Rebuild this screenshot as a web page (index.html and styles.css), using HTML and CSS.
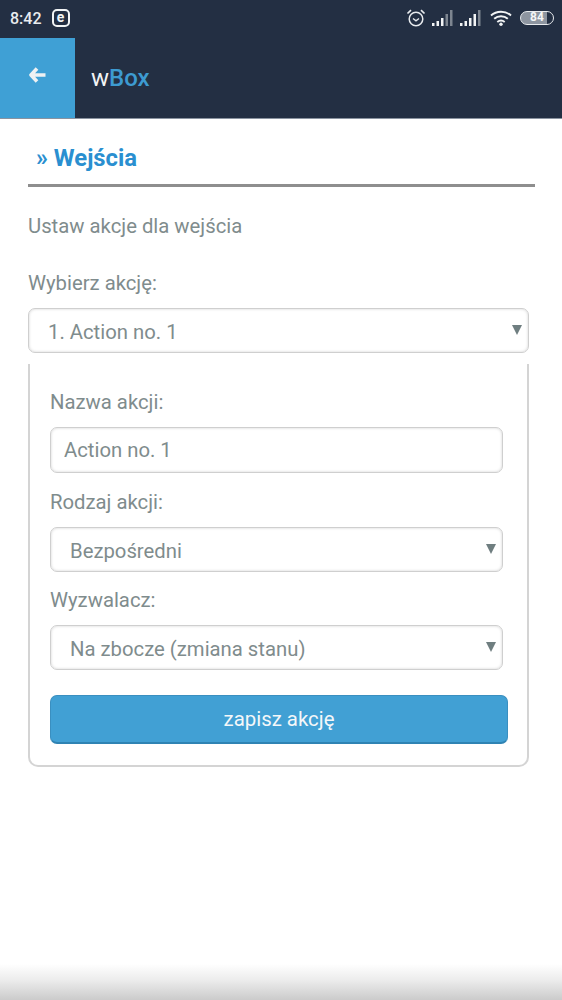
FILE: index.html
```html
<!DOCTYPE html>
<html lang="pl">
<head>
<meta charset="utf-8">
<title>wBox</title>
<link rel="stylesheet" href="styles.css">
</head>
<body>
<div class="page">
  <div class="statusbar">
    <div class="status-left">
      <span class="clock">8:42</span>
      <span class="e-badge">e</span>
    </div>
    <div class="status-right">
      <svg class="ic-alarm" viewBox="0 0 20 20" width="20" height="20"><circle cx="10" cy="11" r="6.800" fill="none" stroke="#e8ebee" stroke-width="1.500"/><path d="M7 10.500l3 2.400 3-2.400" fill="none" stroke="#e8ebee" stroke-width="1.400"/><path d="M1.500 5.500L5 2.200M18.500 5.500L15 2.200" stroke="#e8ebee" stroke-width="1.700" fill="none"/></svg>
      <svg class="ic-signal" viewBox="0 0 22 16" width="22" height="16"><rect x="0" y="13" width="2.500" height="3" fill="#f2f4f5"/><rect x="4.500" y="11" width="2.500" height="5" fill="#f2f4f5"/><rect x="9" y="8" width="2.500" height="8" fill="#f2f4f5"/><rect x="13.500" y="4" width="2.500" height="12" fill="#7d8590"/><rect x="18" y="0" width="2.500" height="16" fill="#7d8590"/></svg>
      <svg class="ic-signal" viewBox="0 0 22 16" width="22" height="16"><rect x="0" y="13" width="2.500" height="3" fill="#f2f4f5"/><rect x="4.500" y="11" width="2.500" height="5" fill="#f2f4f5"/><rect x="9" y="8" width="2.500" height="8" fill="#f2f4f5"/><rect x="13.500" y="4" width="2.500" height="12" fill="#f2f4f5"/><rect x="18" y="0" width="2.500" height="16" fill="#7d8590"/></svg>
      <svg class="ic-wifi" viewBox="0 0 22 16" width="22" height="16"><path d="M1 5.500C6.500 .5 15.500 .5 21 5.500M4.200 8.800C8 5.300 14 5.300 17.800 8.800M7.300 12C9.500 10.200 12.500 10.200 14.700 12" fill="none" stroke="#f2f4f5" stroke-width="1.900"/><circle cx="11" cy="14.300" r="1.700" fill="#f2f4f5"/></svg>
      <span class="battery">84</span>
    </div>
  </div>
  <header class="appbar">
    <a class="back" href="#" aria-label="Wstecz">
      <svg viewBox="0 0 18 16" width="18" height="16"><path d="M8 1.500L2 8l6 6.500M2.500 8H16.500" fill="none" stroke="#eef1f3" stroke-width="3.600" stroke-linejoin="round"/></svg>
    </a>
    <div class="brand">w<b>Box</b></div>
  </header>
  <main class="content">
    <h1 class="title">» Wejścia</h1>
    <p class="intro">Ustaw akcje dla wejścia</p>
    <label class="label top-label">Wybierz akcję:</label>
    <div class="select-wrap top-select">
      <select class="field select"><option>1. Action no. 1</option></select>
    </div>
    <section class="card">
      <label class="label first">Nazwa akcji:</label>
      <input class="field input" type="text" value="Action no. 1">
      <label class="label second">Rodzaj akcji:</label>
      <div class="select-wrap">
        <select class="field select"><option>Bezpośredni</option></select>
      </div>
      <label class="label third">Wyzwalacz:</label>
      <div class="select-wrap">
        <select class="field select"><option>Na zbocze (zmiana stanu)</option></select>
      </div>
      <button class="save" type="button">zapisz akcję</button>
    </section>
  </main>
  <div class="bottom-fade"></div>
</div>
</body>
</html>
```
FILE: styles.css
```css
* { box-sizing: border-box; }
html, body { margin: 0; padding: 0; }
body { background: #fff; font-family: Roboto, "Liberation Sans", sans-serif; color: #7f8c8d; }
.page { width: 562px; height: 1000px; display: flex; flex-direction: column; overflow: hidden; }

.statusbar { height: 38px; background: #232f43; display: flex; justify-content: space-between; align-items: center; padding: 0 8px 2px 10px; }
.status-left { display: flex; align-items: center; gap: 10px; }
.clock { color: #e9ecef; font-size: 16px; font-weight: 500; }
.e-badge { width: 18px; height: 18px; border: 2px solid #f2f4f5; border-radius: 5px; color: #f2f4f5; font-size: 14px; font-weight: 700; line-height: 13px; text-align: center; }
.status-right { display: flex; align-items: center; gap: 6px; }
.ic-wifi { margin-left: 2px; margin-right: 2px; }
.battery { width: 34px; height: 14px; border: 1.500px solid #e8ebee; border-radius: 7px; color: #f4f6f7; font-size: 12px; font-weight: 700; line-height: 11px; text-align: center; background: linear-gradient(90deg, #8d95a0 0 80%, transparent 80%); }

.appbar { height: 81px; background: #232f43; display: flex; align-items: stretch; border-bottom: 1px solid #8a93a0; }
.back { width: 75px; background: #3fa0d5; display: flex; align-items: center; justify-content: center; padding-bottom: 7px; }
.brand { color: #f2f4f5; font-size: 24px; margin-left: 16px; align-self: center; }
.brand b { color: #3d9bd1; font-weight: 500; }

.content { padding: 0 27px 0 28px; }
.title { margin: 0; height: 68px; padding: 24px 0 0 8px; border-bottom: 3px solid #8e8e8e; color: #2a8fd0; font-size: 23.800px; font-weight: 700; line-height: 30px; }
.intro { margin: 27px 0 0; font-size: 20.300px; line-height: 24px; }
.label { display: block; font-size: 20.300px; line-height: 24px; color: #7f8c8d; }
.top-label { margin-top: 33px; margin-bottom: 13px; }

.select-wrap { position: relative; }
.top-select { width: 501px; }
.select-wrap::after { content: ""; position: absolute; right: 7px; top: 17px; border-left: 5px solid transparent; border-right: 5px solid transparent; border-top: 10px solid #6f7e80; }
.field { display: block; width: 100%; height: 45px; border: 1px solid #cfcfcf; border-radius: 7px; background: #fff; color: #7f8c8d; font-family: inherit; font-size: 20.300px; box-shadow: inset 0 0 3px rgba(0,0,0,.18); outline: none; margin: 0; }
.select { appearance: none; -webkit-appearance: none; padding: 2px 19px 0; }
.input { height: 46px; padding: 0 13px; }

.card { margin-top: 11px; height: 403px; width: 501px; padding: 26px 24px 0 20px; border: 2px solid #d4d4d4; border-top: 0; border-radius: 0 0 10px 10px; }
.first { margin-bottom: 13px; }
.second { margin-top: 17px; margin-bottom: 13px; }
.third { margin-top: 16px; margin-bottom: 13px; }
.save { display: block; width: 458px; height: 49px; margin-top: 25px; border: 1px solid #3a8fc0; border-bottom: 2px solid #2f83b3; border-radius: 7px; background: #41a0d4; color: #f4f7f9; font-family: inherit; font-size: 20.400px; }

.bottom-fade { margin-top: auto; height: 36px; background: linear-gradient(180deg, rgba(200,200,200,0) 0%, #ececec 45%, #cbcbcb 100%); }
```
